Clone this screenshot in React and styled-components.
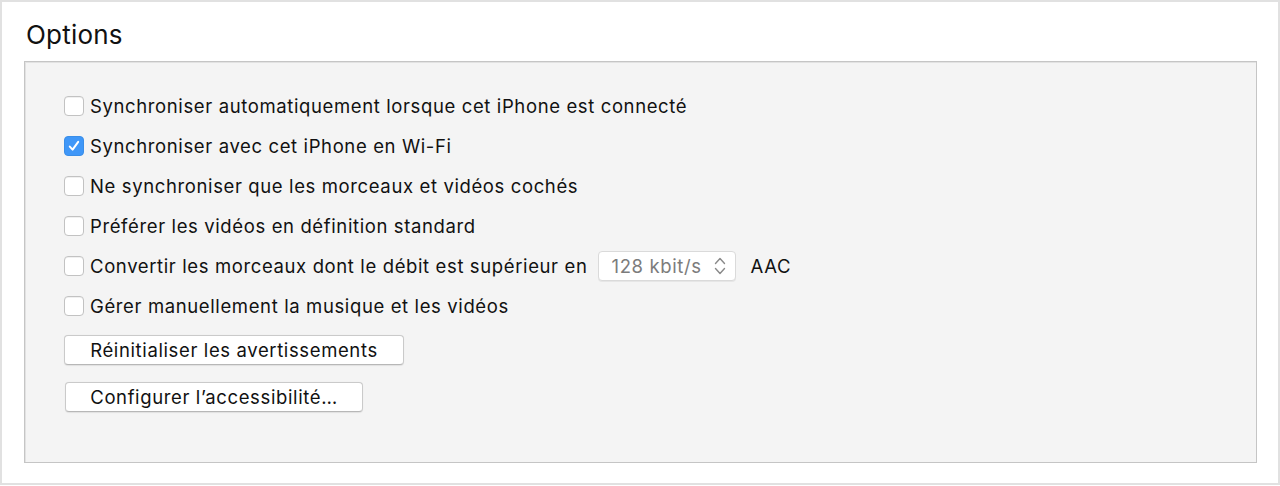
import React from "react";
import styled, { createGlobalStyle } from "styled-components";

const GlobalStyle = createGlobalStyle`
  html, body {
    margin: 0;
    padding: 0;
    background: #ffffff;
  }
  body {
    font-family: Inter, "Noto Sans", "Liberation Sans", sans-serif;
    color: #111111;
    -webkit-font-smoothing: antialiased;
  }
`;

const Frame = styled.div`
  box-sizing: border-box;
  width: 1280px;
  height: 485px;
  border: 2px solid #e1e1e1;
  background: #ffffff;
  padding: 0 21px 20px 22px;
  display: flex;
  flex-direction: column;
`;

const Title = styled.h2`
  margin: 0;
  padding: 17px 0 0 2px;
  height: 59px;
  flex: none;
  box-sizing: border-box;
  font-size: 26px;
  font-weight: 400;
  line-height: 32px;
  letter-spacing: 0.2px;
  color: #111111;
`;

const Panel = styled.div`
  flex: 1;
  box-sizing: border-box;
  background: #f4f4f4;
  border: 1px solid #c5c5c5;
  box-shadow: inset 1px 1px 0 #e2e2e2;
  padding: 24px 39px 0;
  display: flex;
  flex-direction: column;
  align-items: flex-start;
`;

const Row = styled.label`
  height: 40px;
  display: flex;
  align-items: center;
  font-size: 18.5px;
  letter-spacing: 0.62px;
  color: #111111;
`;

const Box = styled.span`
  box-sizing: border-box;
  width: 20px;
  height: 20px;
  border-radius: 4px;
  margin-right: 6px;
  flex: none;
  display: flex;
  align-items: center;
  justify-content: center;
  background: ${(p) => (p.$checked ? "#3f97f8" : "#ffffff")};
  border: 1px solid ${(p) => (p.$checked ? "#3a8ee8" : "#c2c2c2")};
  box-shadow: ${(p) => (p.$checked ? "none" : "inset 0 1px 0 #f0f0f0")};
`;

const Select = styled.span`
  box-sizing: border-box;
  height: 30px;
  width: 138px;
  margin: 0 14px 0 11px;
  padding: 0 8px 0 12px;
  display: flex;
  align-items: center;
  justify-content: space-between;
  background: #ffffff;
  border: 1px solid #dadada;
  border-radius: 4px;
  box-shadow: 0 1px 0 #e6e6e6;
  color: #7c7c7c;
  font-size: 18.5px;
  letter-spacing: 0.62px;
`;

const Button = styled.button`
  box-sizing: border-box;
  height: 30px;
  width: ${(p) => p.$width}px;
  margin-top: ${(p) => p.$top}px;
  margin-left: ${(p) => p.$left || 0}px;
  padding: 0;
  background: #ffffff;
  border: 1px solid #cacaca;
  border-bottom-color: #b7b7b7;
  border-radius: 4px;
  box-shadow: 0 0.5px 1px rgba(0, 0, 0, 0.08);
  font-family: inherit;
  font-size: 18.5px;
  letter-spacing: 0.62px;
  color: #111111;
  text-align: center;
`;

function Check() {
  return (
    <svg width="14" height="14" viewBox="0 0 14 14">
      <path
        d="M2.8 7.6 L5.6 10.6 L11.2 2.8"
        fill="none"
        stroke="#ffffff"
        strokeWidth="2"
        strokeLinecap="round"
        strokeLinejoin="round"
      />
    </svg>
  );
}

function Chevrons() {
  return (
    <svg width="14" height="22" viewBox="0 0 14 22">
      <path
        d="M2.5 8.5 L7 3.5 L11.5 8.5 M2.5 13.5 L7 18.5 L11.5 13.5"
        fill="none"
        stroke="#8a8a8a"
        strokeWidth="1.4"
        strokeLinecap="round"
        strokeLinejoin="round"
      />
    </svg>
  );
}

function Option({ checked, children }) {
  return (
    <Row>
      <Box $checked={checked}>{checked && <Check />}</Box>
      {children}
    </Row>
  );
}

export default function App() {
  return (
    <>
      <GlobalStyle />
      <Frame>
        <Title>Options</Title>
        <Panel>
          <Option>Synchroniser automatiquement lorsque cet iPhone est connecté</Option>
          <Option checked>Synchroniser avec cet iPhone en Wi-Fi</Option>
          <Option>Ne synchroniser que les morceaux et vidéos cochés</Option>
          <Option>Préférer les vidéos en définition standard</Option>
          <Option>
            Convertir les morceaux dont le débit est supérieur en
            <Select>
              128 kbit/s
              <Chevrons />
            </Select>
            AAC
          </Option>
          <Option>Gérer manuellement la musique et les vidéos</Option>
          <Button $width={340} $top={9}>Réinitialiser les avertissements</Button>
          <Button $width={298} $top={17} $left={1}>Configurer l’accessibilité…</Button>
        </Panel>
      </Frame>
    </>
  );
}
